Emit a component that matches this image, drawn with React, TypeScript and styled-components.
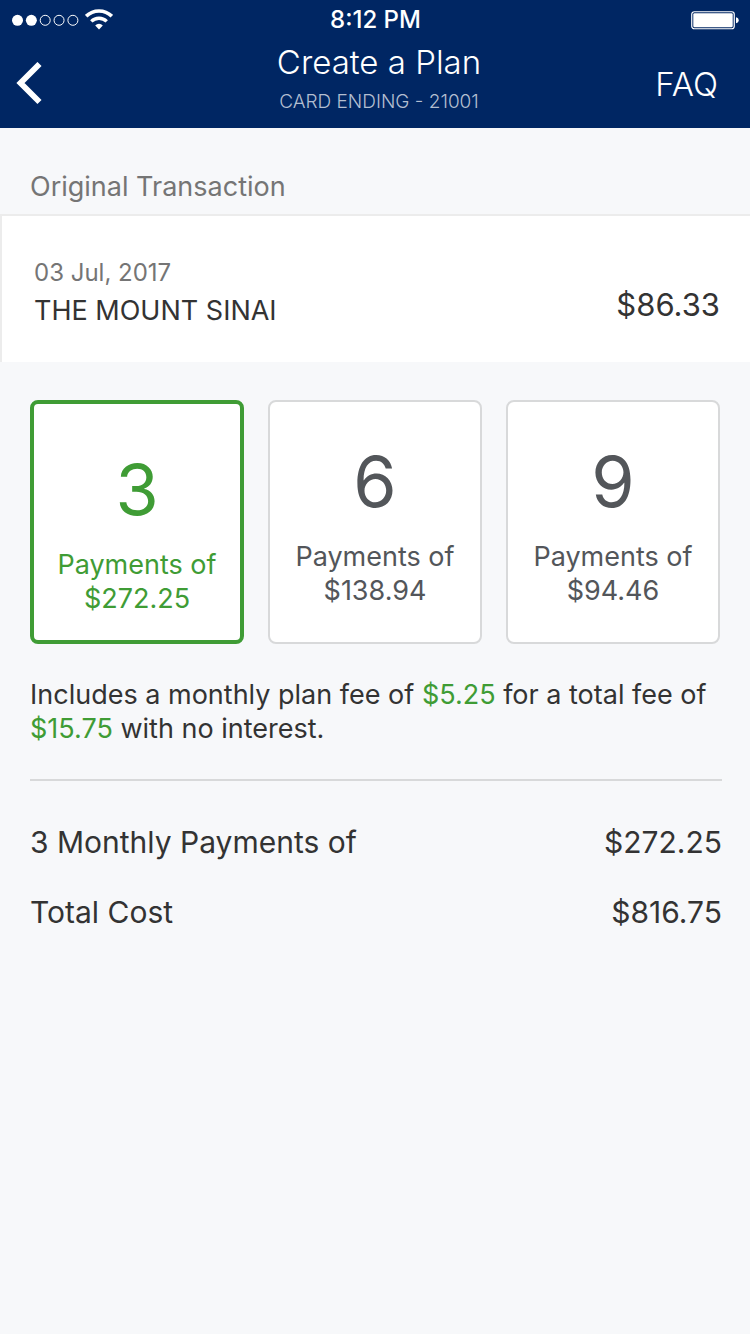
import React, { useState } from "react";
import styled, { createGlobalStyle } from "styled-components";

const colors = {
  navy: "#002663",
  page: "#f7f8fa",
  green: "#3f9c35",
  ink: "#333333",
  slate: "#53565a",
  muted: "#757575",
  line: "#d8d9da",
};

const GlobalStyle = createGlobalStyle`
  *, *::before, *::after { box-sizing: border-box; }
  body {
    margin: 0;
    background: ${colors.page};
    color: ${colors.ink};
    font-family: Inter, "Liberation Sans", sans-serif;
    font-size: 27px;
    line-height: 34px;
    font-weight: 400;
  }
  h1, h2, p, dl, dd, dt, fieldset { margin: 0; padding: 0; border: 0; font-weight: inherit; }
`;

const Header = styled.header`
  background: ${colors.navy};
  color: #fff;
`;

const StatusBar = styled.div`
  display: grid;
  grid-template-columns: 1fr auto 1fr;
  align-items: center;
  height: 40px;
  padding: 0 11px 0 12px;
`;

const Signal = styled.div`
  display: flex;
  align-items: center;
  gap: 6px;
`;

const Time = styled.time`
  font-size: 24px;
  line-height: 28px;
  font-weight: 500;
`;

const Power = styled.div`
  display: flex;
  justify-content: flex-end;
`;

const NavBar = styled.nav`
  display: grid;
  grid-template-columns: 104px 1fr 96px;
  align-items: center;
  height: 88px;
`;

const BackButton = styled.button`
  display: flex;
  justify-content: flex-start;
  width: 64px;
  padding: 0 0 0 16px;
  border: 0;
  background: none;
  color: inherit;
  cursor: pointer;
`;

const Heading = styled.div`
  text-align: center;
  padding-bottom: 8px;
`;

const Title = styled.h1`
  font-size: 33px;
  line-height: 44px;
  font-weight: 300;
`;

const Subtitle = styled.p`
  font-size: 19px;
  line-height: 36px;
  font-weight: 300;
  color: #b3bed0;
`;

const FaqLink = styled.a`
  justify-self: end;
  padding-right: 32px;
  color: inherit;
  font-size: 33px;
  line-height: 44px;
  font-weight: 300;
  text-decoration: none;
`;

const SectionTitle = styled.h2`
  padding: 42px 30px 10px;
  font-size: 27px;
  line-height: 34px;
  color: ${colors.muted};
`;

const Transaction = styled.section`
  display: flex;
  align-items: center;
  justify-content: space-between;
  min-height: 148px;
  padding: 8px 30px 0 32px;
  background: #fff;
  border-top: 2px solid #ececec;
  border-left: 2px solid #ececec;
`;

const TransactionDate = styled.p`
  font-size: 24px;
  line-height: 36px;
  color: ${colors.muted};
`;

const Merchant = styled.p`
  line-height: 40px;
`;

const Amount = styled.p`
  padding-top: 24px;
  font-size: 31px;
  line-height: 40px;
`;

const Content = styled.main`
  padding: 38px 30px;
`;

const Plans = styled.fieldset`
  display: grid;
  grid-template-columns: repeat(3, minmax(0, 1fr));
  gap: 24px;
`;

const PlanCard = styled.label<{ $selected: boolean }>`
  display: flex;
  flex-direction: column;
  align-items: center;
  height: 244px;
  padding-top: ${(p) => (p.$selected ? 46 : 40)}px;
  border: ${(p) => (p.$selected ? `4px solid ${colors.green}` : `2px solid ${colors.line}`)};
  border-radius: 8px;
  background: #fff;
  color: ${(p) => (p.$selected ? colors.green : colors.slate)};
  text-align: center;
  cursor: pointer;
`;

const PlanRadio = styled.input`
  appearance: none;
  width: 0;
  height: 0;
  margin: 0;
`;

const PlanCount = styled.span`
  margin-bottom: 18px;
  font-size: 70px;
  line-height: 80px;
`;

const FeeNote = styled.p`
  padding: 34px 0 33px;
`;

const Highlight = styled.span`
  color: ${colors.green};
`;

const Totals = styled.dl`
  margin-right: -2px;
  border-top: 2px solid ${colors.line};
  padding-top: 26px;
`;

const TotalRow = styled.div`
  display: flex;
  justify-content: space-between;
  align-items: center;
  height: 70px;
  font-size: 30px;
  line-height: 40px;
`;

const plans = [
  { count: 3, payment: "$272.25" },
  { count: 6, payment: "$138.94" },
  { count: 9, payment: "$94.46" },
];

const SignalDots = () => (
  <svg width="67" height="12" viewBox="0 0 67 12" aria-hidden="true">
    {[0, 1, 2, 3, 4].map((i) => (
      <circle
        key={i}
        cx={5.5 + i * 13.85}
        cy="6.3"
        r={i < 2 ? 5.5 : 5}
        fill={i < 2 ? "#fff" : "none"}
        stroke={i < 2 ? "none" : "#fff"}
        strokeWidth="1"
      />
    ))}
  </svg>
);

const WifiIcon = () => (
  <svg width="28" height="22" viewBox="0 0 28 22" aria-hidden="true">
    <g fill="none" stroke="#fff">
      <path d="M1.2 7.2A18.2 18.2 0 0 1 26.8 7.2" strokeWidth="3.6" />
      <path d="M6.3 12.4A11 11 0 0 1 21.7 12.4" strokeWidth="3.4" />
    </g>
    <path d="M10.2 16.4A5.4 5.4 0 0 1 17.8 16.4L14 20.4Z" fill="#fff" />
  </svg>
);

const BatteryIcon = () => (
  <svg width="48" height="19" viewBox="0 0 48 19" aria-hidden="true">
    <rect x="0.75" y="0.75" width="42.5" height="17" rx="2.5" fill="none" stroke="#fff" strokeWidth="1.2" />
    <rect x="2.3" y="2.3" width="39.4" height="13.9" rx="1.2" fill="#fff" />
    <path d="M45 6.2C48.6 6.7 48.6 11.7 45 12.2Z" fill="#fff" />
  </svg>
);

const BackIcon = () => (
  <svg width="27" height="44" viewBox="0 0 27 44" aria-hidden="true">
    <path d="M23.5 2L4.5 21L23.5 40" fill="none" stroke="#fff" strokeWidth="5.8" />
  </svg>
);

export default function App() {
  const [selected, setSelected] = useState(3);
  return (
    <>
      <GlobalStyle />
      <Header>
        <StatusBar>
          <Signal>
            <SignalDots />
            <WifiIcon />
          </Signal>
          <Time>8:12 PM</Time>
          <Power>
            <BatteryIcon />
          </Power>
        </StatusBar>
        <NavBar>
          <BackButton type="button" aria-label="Back">
            <BackIcon />
          </BackButton>
          <Heading>
            <Title>Create a Plan</Title>
            <Subtitle>CARD ENDING - 21001</Subtitle>
          </Heading>
          <FaqLink href="#faq">FAQ</FaqLink>
        </NavBar>
      </Header>
      <SectionTitle>Original Transaction</SectionTitle>
      <Transaction>
        <div>
          <TransactionDate>03 Jul, 2017</TransactionDate>
          <Merchant>THE MOUNT SINAI</Merchant>
        </div>
        <Amount>$86.33</Amount>
      </Transaction>
      <Content>
        <Plans aria-label="Payment plan">
          {plans.map(({ count, payment }) => (
            <PlanCard key={count} $selected={selected === count}>
              <PlanRadio
                type="radio"
                name="plan"
                value={count}
                checked={selected === count}
                onChange={() => setSelected(count)}
              />
              <PlanCount>{count}</PlanCount>
              <span>Payments of</span>
              <span>{payment}</span>
            </PlanCard>
          ))}
        </Plans>
        <FeeNote>
          Includes a monthly plan fee of <Highlight>$5.25</Highlight> for a total fee of{" "}
          <Highlight>$15.75</Highlight> with no interest.
        </FeeNote>
        <Totals>
          <TotalRow>
            <dt>3 Monthly Payments of</dt>
            <dd>$272.25</dd>
          </TotalRow>
          <TotalRow>
            <dt>Total Cost</dt>
            <dd>$816.75</dd>
          </TotalRow>
        </Totals>
      </Content>
    </>
  );
}
